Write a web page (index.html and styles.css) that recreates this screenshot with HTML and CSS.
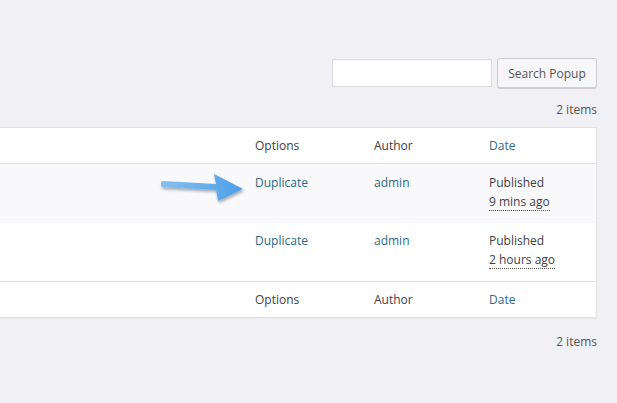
FILE: index.html
```html
<!DOCTYPE html>
<html>
<head>
<meta charset="utf-8">
<link rel="stylesheet" href="styles.css">
</head>
<body>
<div class="page">
  <div class="search">
    <input class="search-input" type="text">
    <button class="search-btn">Search Popup</button>
  </div>
  <div class="count top">2 items</div>
  <div class="table">
    <div class="row head">
      <div class="cell"></div>
      <div class="cell">Options</div>
      <div class="cell">Author</div>
      <div class="cell link">Date</div>
    </div>
    <div class="row body alt">
      <div class="cell arrow-cell">
        <svg class="arrow" width="96" height="40" viewBox="0 0 96 40">
          <defs>
            <linearGradient id="g" x1="0" y1="0" x2="1" y2="0">
              <stop offset="0" stop-color="#86c0f0"/>
              <stop offset="1" stop-color="#4d9fe9"/>
            </linearGradient>
            <filter id="s" x="-20%" y="-40%" width="140%" height="180%">
              <feDropShadow dx="1" dy="2" stdDeviation="1.4" flood-color="#1a2a40" flood-opacity="0.4"/>
            </filter>
          </defs>
          <path d="M7 12 L61 15 L59 5 L88 20 L63 32 L61 21 L7 18 Q4.5 15 7 12 Z" fill="url(#g)" filter="url(#s)"/>
        </svg>
      </div>
      <div class="cell link">Duplicate</div>
      <div class="cell link">admin</div>
      <div class="cell">Published<br><abbr class="time">9 mins ago</abbr></div>
    </div>
    <div class="row body">
      <div class="cell"></div>
      <div class="cell link">Duplicate</div>
      <div class="cell link">admin</div>
      <div class="cell">Published<br><abbr class="time">2 hours ago</abbr></div>
    </div>
    <div class="row foot">
      <div class="cell"></div>
      <div class="cell">Options</div>
      <div class="cell">Author</div>
      <div class="cell link">Date</div>
    </div>
  </div>
  <div class="count bottom">2 items</div>
</div>
</body>
</html>
```
FILE: styles.css
```css
html, body {
  margin: 0;
  padding: 0;
  background: #f1f0f4;
}
body {
  font-family: "Open Sans", "Noto Sans", sans-serif;
  font-size: 12px;
  color: #3c4146;
  width: 617px;
  height: 403px;
  overflow: hidden;
}
.page {
  padding: 58px 20px 0 0;
}
.search {
  display: flex;
  justify-content: flex-end;
  align-items: center;
  gap: 5px;
}
.search-input {
  box-sizing: border-box;
  width: 160px;
  height: 28px;
  margin: 0;
  border: 1px solid #dddce2;
  background: #fff;
  box-shadow: inset 0 1px 2px rgba(0,0,0,0.05);
}
.search-btn {
  box-sizing: border-box;
  height: 30px;
  width: 100px;
  margin: 0;
  padding: 0 10px;
  border: 1px solid #cfced5;
  border-radius: 3px;
  background: #f7f6f9;
  color: #555;
  font-family: inherit;
  font-size: 12px;
  box-shadow: 0 1px 0 #cfced5;
}
.count {
  text-align: right;
  color: #555;
  line-height: 18px;
}
.count.top {
  margin-top: 13px;
  margin-bottom: 8px;
}
.count.bottom {
  margin-top: 15px;
}
.table {
  background: #fff;
  border: 1px solid #e1e0e6;
  border-left: none;
  box-shadow: 0 1px 1px rgba(0,0,0,0.04);
}
.row {
  display: grid;
  grid-template-columns: 245px 119px 115px 1fr;
}
.cell {
  padding: 0 10px;
  line-height: 19px;
}
.head .cell, .foot .cell {
  padding-top: 8px;
  padding-bottom: 8px;
}
.head {
  border-bottom: 1px solid #e1e0e6;
}
.foot {
  border-top: 1px solid #e1e0e6;
}
.body .cell {
  padding-top: 9px;
  padding-bottom: 12px;
}
.body + .body .cell {
  padding-top: 8px;
  padding-bottom: 12px;
}
.alt {
  background: #f9f8fb;
}
.link {
  color: #2a6a87;
}
.time {
  text-decoration: none;
  border-bottom: 1px dotted #555;
}
.arrow-cell {
  position: relative;
}
.arrow {
  position: absolute;
  left: 155px;
  top: 5px;
}
```
